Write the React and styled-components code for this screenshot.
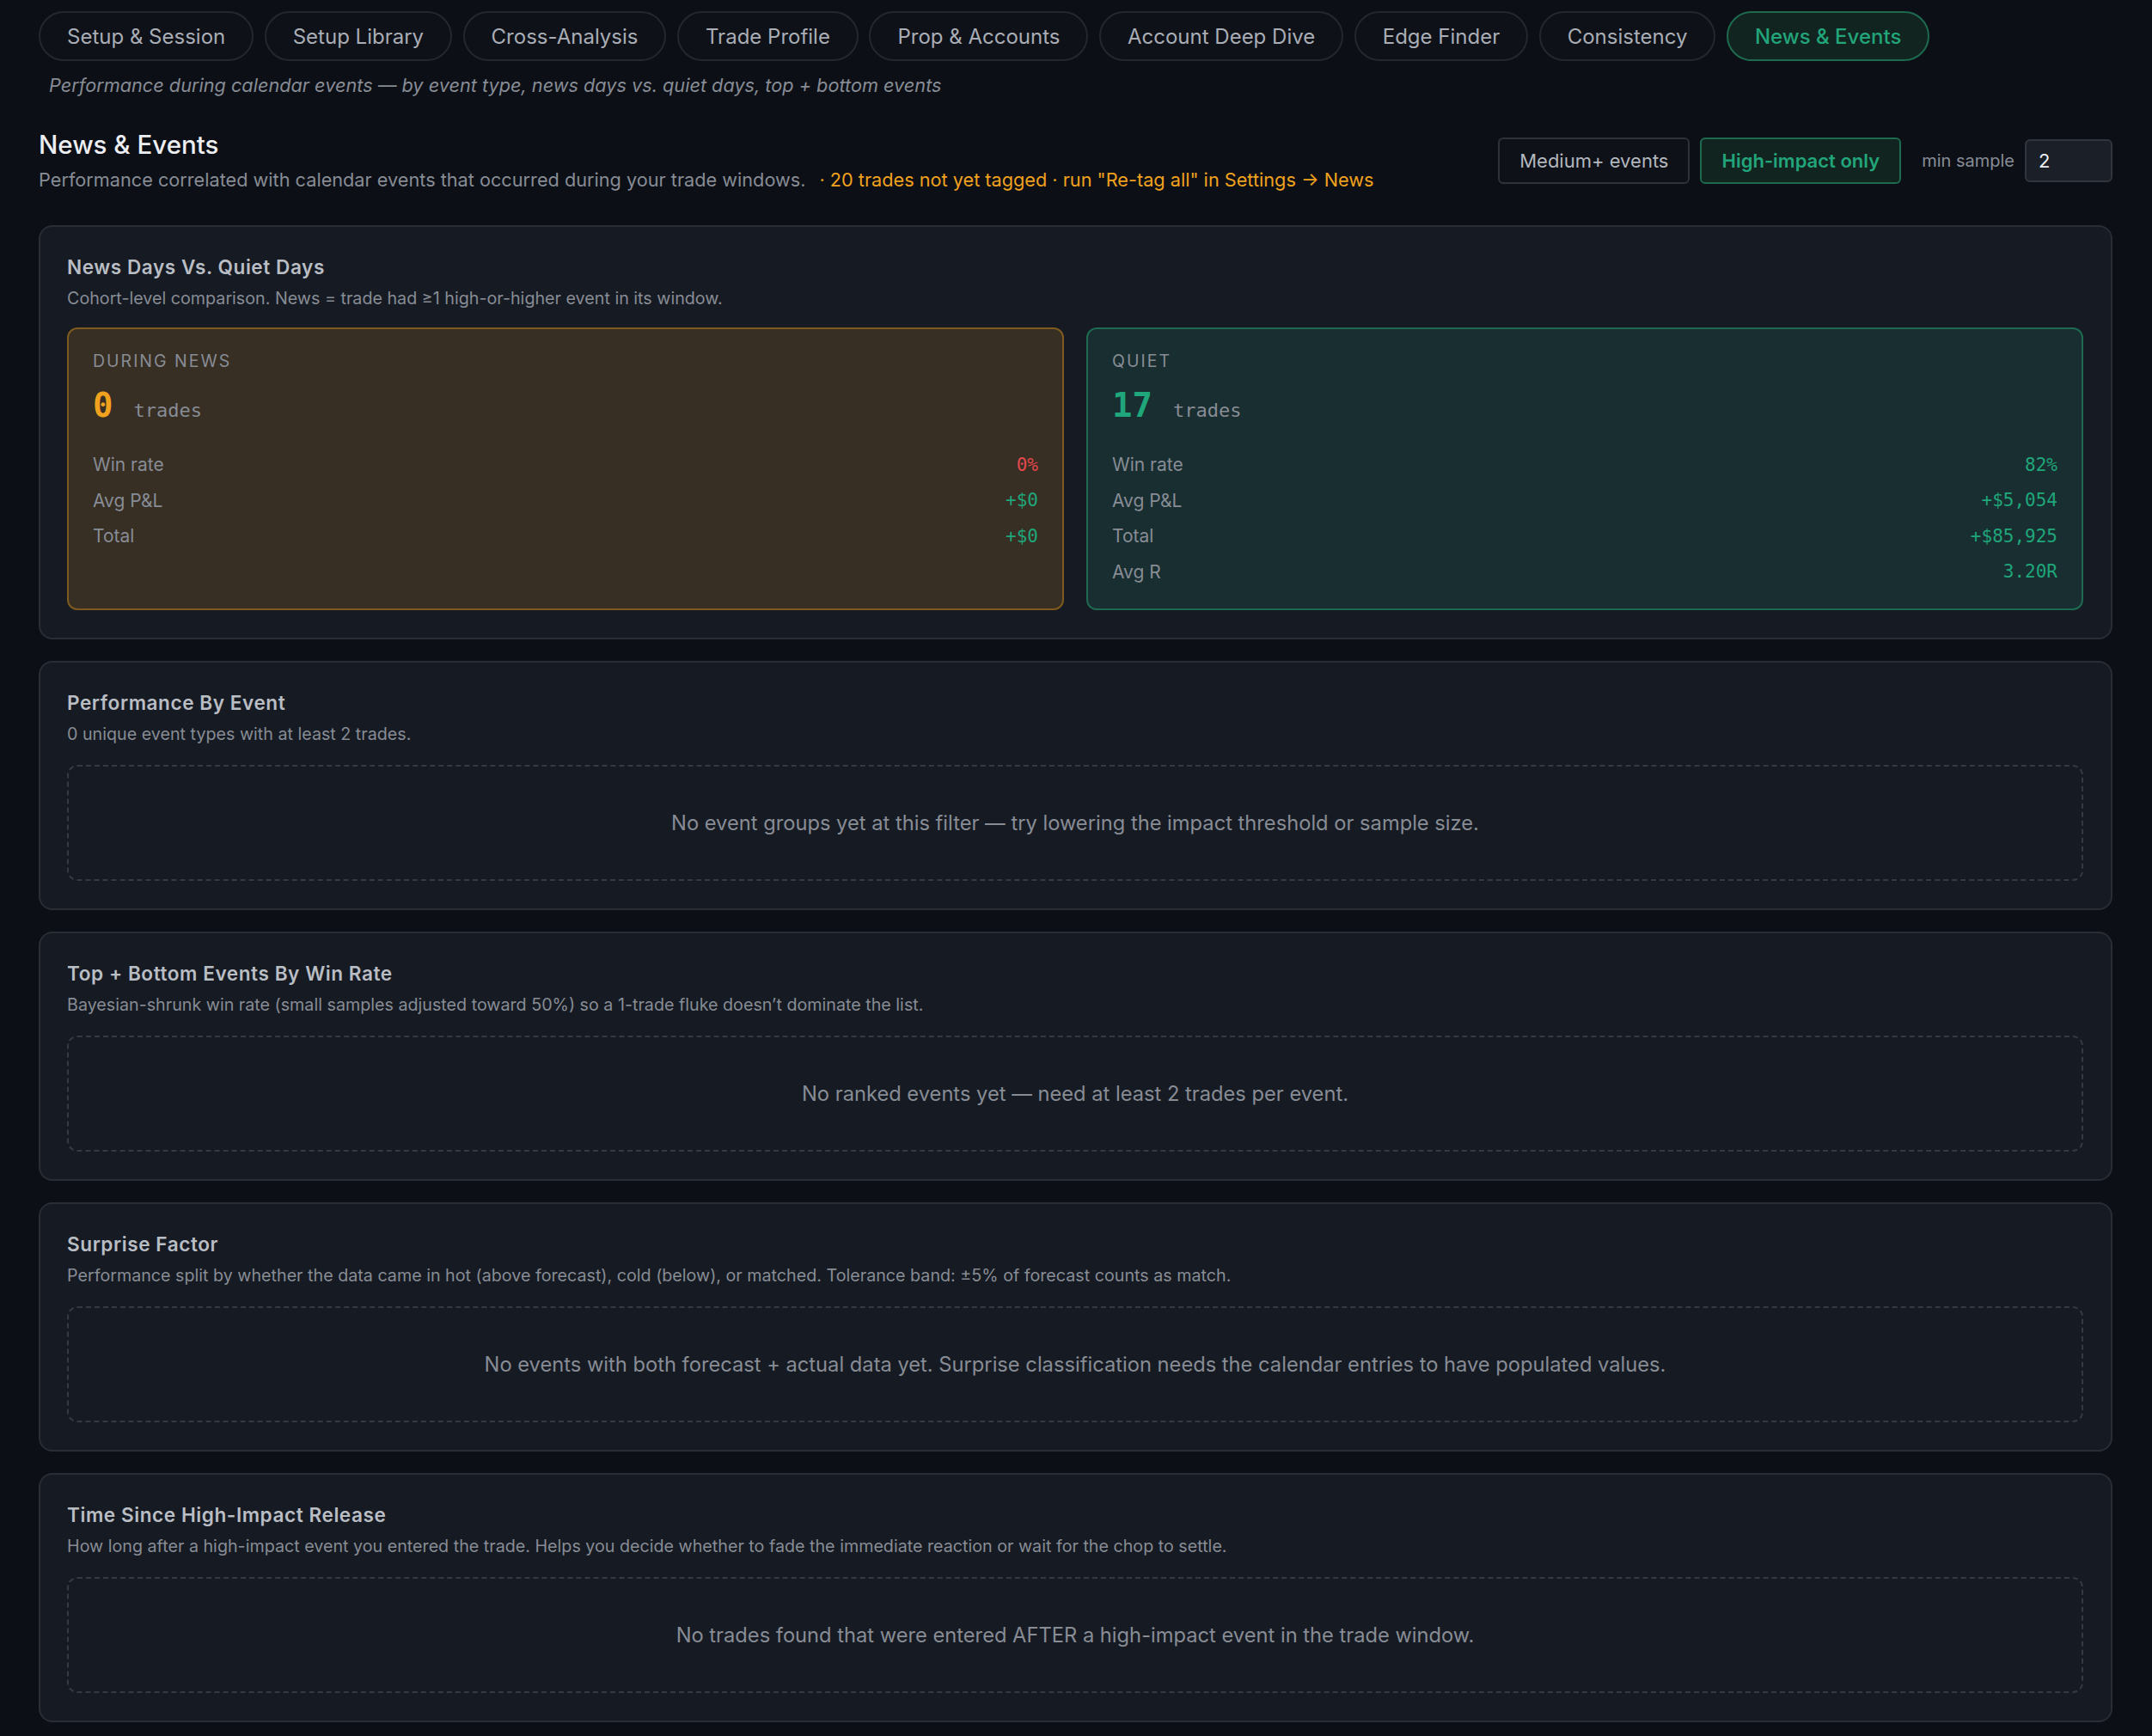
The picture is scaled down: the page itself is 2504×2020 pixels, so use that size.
import React from 'react';
import styled, { createGlobalStyle } from 'styled-components';

const GlobalStyle = createGlobalStyle`
    html, body {
        margin: 0;
        padding: 0;
        background: #0c0f16;
    }
    body {
        font-family: Inter, "Noto Sans", "Liberation Sans", sans-serif;
        color: #c5c9d0;
    }
    * {
        box-sizing: border-box;
    }
`;

const Page = styled.div`
    padding: 13px 46px 16px 45px;
    min-height: 2020px;
    background: #0c0f16;
`;

const TabBar = styled.nav`
    display: flex;
    gap: 12.5px;
`;

const Tab = styled.div`
    height: 58px;
    display: flex;
    align-items: center;
    padding: 0 31px;
    border-radius: 999px;
    font-size: 24px;
    font-weight: ${p => (p.$active ? 500 : 400)};
    color: ${p => (p.$active ? '#22a57a' : '#a9adb5')};
    background: ${p => (p.$active ? '#12241f' : '#0e1118')};
    border: 2px solid ${p => (p.$active ? '#1d6a4f' : '#23272f')};
    white-space: nowrap;
`;

const Tagline = styled.p`
    margin: 13px 0 0 12px;
    font-size: 21.7px;
    font-style: italic;
    color: #878c95;
    line-height: 30px;
`;

const Header = styled.div`
    display: flex;
    justify-content: space-between;
    align-items: center;
    margin-top: 34px;
`;

const HeaderText = styled.div`
    h2 {
        margin: 0;
        font-size: 29.5px;
        font-weight: 500;
        color: #eceef2;
        line-height: 40px;
    }
    p {
        margin: 5px 0 0;
        font-size: 21.7px;
        line-height: 32px;
        color: #878c95;
    }
`;

const Warn = styled.span`
    color: #f0a21f;
    margin-left: 16px;
`;

const Controls = styled.div`
    display: flex;
    align-items: center;
    gap: 12px;
`;

const FilterButton = styled.div`
    height: 54px;
    display: flex;
    align-items: center;
    padding: 0 23px;
    border-radius: 6px;
    font-size: 22px;
    font-weight: ${p => (p.$active ? 600 : 400)};
    color: ${p => (p.$active ? '#22a57a' : '#b3b7be')};
    background: ${p => (p.$active ? '#12241f' : '#0e1118')};
    border: 2px solid ${p => (p.$active ? '#1d6a4f' : '#2e323a')};
`;

const SampleLabel = styled.span`
    font-size: 20px;
    color: #878c95;
    margin-left: 12px;
`;

const SampleInput = styled.div`
    width: 102px;
    height: 50px;
    display: flex;
    align-items: center;
    padding-left: 14px;
    border-radius: 6px;
    background: #1b1f28;
    border: 2px solid #30353e;
    font-size: 22px;
    color: #eceef2;
`;

const Sections = styled.div`
    display: flex;
    flex-direction: column;
    gap: 25px;
    margin-top: 37px;
`;

const Card = styled.section`
    background: #161a22;
    border: 2px solid #282d36;
    border-radius: 16px;
    padding: 33px 32px 32px 31px;
`;

const CardTitle = styled.h3`
    margin: 0;
    font-size: 22.6px;
    font-weight: 600;
    letter-spacing: 0.55px;
    color: #b9bdc4;
    line-height: 28px;
`;

const CardSub = styled.p`
    margin: 8px 0 0;
    font-size: 19.7px;
    line-height: 28px;
    color: #878c95;
`;

const Empty = styled.div`
    margin-top: 22px;
    height: 135px;
    display: flex;
    align-items: center;
    justify-content: center;
    border: 2px dashed #343944;
    border-radius: 12px;
    font-size: 23.7px;
    color: #878c95;
`;

const CohortGrid = styled.div`
    display: grid;
    grid-template-columns: 1fr 1fr;
    gap: 26px;
    margin-top: 20px;
`;

const Cohort = styled.div`
    border-radius: 12px;
    padding: 24px 28px 22px 28px;
    background: ${p => (p.$tone === 'news' ? '#372e24' : '#192e30')};
    border: 2px solid ${p => (p.$tone === 'news' ? '#7e5a1f' : '#1d6a50')};
`;

const CohortLabel = styled.div`
    font-size: 19.5px;
    letter-spacing: 2px;
    text-transform: uppercase;
    color: #878c95;
    line-height: 26px;
`;

const CountRow = styled.div`
    display: flex;
    align-items: baseline;
    gap: 24px;
    margin-top: 16px;
    margin-bottom: 25px;
    font-family: "DejaVu Sans Mono", "Liberation Mono", monospace;
`;

const Count = styled.span`
    font-size: 39px;
    font-weight: 700;
    color: ${p => p.$color};
    line-height: 46px;
`;

const CountUnit = styled.span`
    font-size: 22px;
    color: #878c95;
`;

const StatRow = styled.div`
    display: flex;
    justify-content: space-between;
    align-items: center;
    height: 41.5px;
    font-size: 21px;
    color: #878c95;
`;

const StatValue = styled.span`
    font-family: "DejaVu Sans Mono", "Liberation Mono", monospace;
    font-size: 21px;
    color: ${p => p.$color};
`;

const GREEN = '#1fa67a';
const RED = '#e5484d';
const ORANGE = '#f0a21f';

const tabs = [
    'Setup & Session',
    'Setup Library',
    'Cross-Analysis',
    'Trade Profile',
    'Prop & Accounts',
    'Account Deep Dive',
    'Edge Finder',
    'Consistency',
    'News & Events',
];

const cohorts = [
    {
        tone: 'news',
        label: 'During news',
        count: 0,
        color: ORANGE,
        stats: [
            ['Win rate', '0%', RED],
            ['Avg P&L', '+$0', GREEN],
            ['Total', '+$0', GREEN],
        ],
    },
    {
        tone: 'quiet',
        label: 'Quiet',
        count: 17,
        color: GREEN,
        stats: [
            ['Win rate', '82%', GREEN],
            ['Avg P&L', '+$5,054', GREEN],
            ['Total', '+$85,925', GREEN],
            ['Avg R', '3.20R', GREEN],
        ],
    },
];

const emptySections = [
    {
        title: 'Performance By Event',
        sub: '0 unique event types with at least 2 trades.',
        empty: 'No event groups yet at this filter — try lowering the impact threshold or sample size.',
    },
    {
        title: 'Top + Bottom Events By Win Rate',
        sub: 'Bayesian-shrunk win rate (small samples adjusted toward 50%) so a 1-trade fluke doesn\u2019t dominate the list.',
        empty: 'No ranked events yet — need at least 2 trades per event.',
    },
    {
        title: 'Surprise Factor',
        sub: 'Performance split by whether the data came in hot (above forecast), cold (below), or matched. Tolerance band: ±5% of forecast counts as match.',
        empty: 'No events with both forecast + actual data yet. Surprise classification needs the calendar entries to have populated values.',
    },
    {
        title: 'Time Since High-Impact Release',
        sub: 'How long after a high-impact event you entered the trade. Helps you decide whether to fade the immediate reaction or wait for the chop to settle.',
        empty: 'No trades found that were entered AFTER a high-impact event in the trade window.',
    },
];

export default function App() {
    return (
        <Page>
            <GlobalStyle />
            <TabBar>
                {tabs.map(t => (
                    <Tab key={t} $active={t === 'News & Events'}>{t}</Tab>
                ))}
            </TabBar>
            <Tagline>Performance during calendar events — by event type, news days vs. quiet days, top + bottom events</Tagline>

            <Header>
                <HeaderText>
                    <h2>News &amp; Events</h2>
                    <p>
                        Performance correlated with calendar events that occurred during your trade windows.
                        <Warn>· 20 trades not yet tagged · run "Re-tag all" in Settings → News</Warn>
                    </p>
                </HeaderText>
                <Controls>
                    <FilterButton>Medium+ events</FilterButton>
                    <FilterButton $active>High-impact only</FilterButton>
                    <SampleLabel>min sample</SampleLabel>
                    <SampleInput>2</SampleInput>
                </Controls>
            </Header>

            <Sections>
                <Card>
                    <CardTitle>News Days Vs. Quiet Days</CardTitle>
                    <CardSub>Cohort-level comparison. News = trade had ≥1 high-or-higher event in its window.</CardSub>
                    <CohortGrid>
                        {cohorts.map(c => (
                            <Cohort key={c.label} $tone={c.tone}>
                                <CohortLabel>{c.label}</CohortLabel>
                                <CountRow>
                                    <Count $color={c.color}>{c.count}</Count>
                                    <CountUnit>trades</CountUnit>
                                </CountRow>
                                {c.stats.map(([label, value, color]) => (
                                    <StatRow key={label}>
                                        <span>{label}</span>
                                        <StatValue $color={color}>{value}</StatValue>
                                    </StatRow>
                                ))}
                            </Cohort>
                        ))}
                    </CohortGrid>
                </Card>

                {emptySections.map(s => (
                    <Card key={s.title}>
                        <CardTitle>{s.title}</CardTitle>
                        <CardSub>{s.sub}</CardSub>
                        <Empty>{s.empty}</Empty>
                    </Card>
                ))}
            </Sections>
        </Page>
    );
}
